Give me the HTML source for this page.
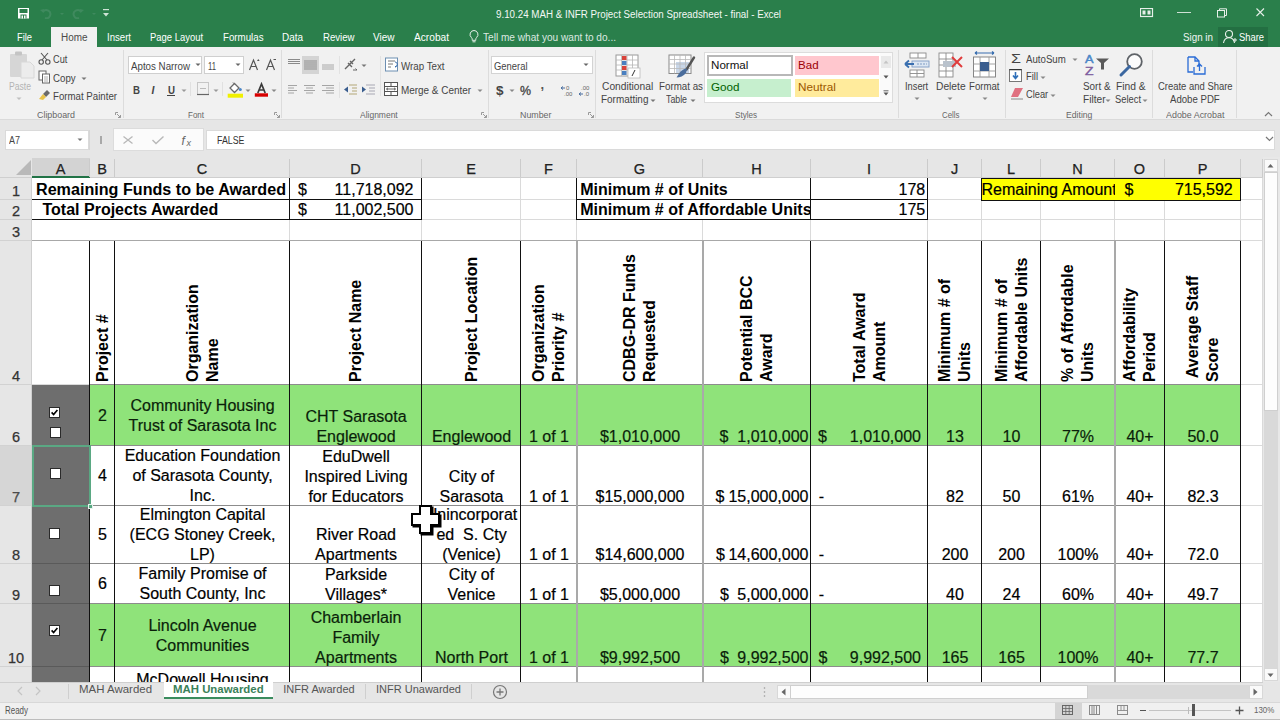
<!DOCTYPE html><html><head><meta charset="utf-8"><style>
html,body{margin:0;padding:0;width:1280px;height:720px;overflow:hidden;background:#fff}
body{position:relative;font-family:"Liberation Sans",sans-serif}
body>div,body>svg{position:absolute;box-sizing:border-box}
.c{position:absolute;box-sizing:border-box;display:flex;flex-direction:column;font-size:16px;line-height:20px;color:#000;overflow:hidden;white-space:pre}
</style></head><body>
<div style="left:0px;top:0px;width:1280px;height:47px;background:#2a7f4b"></div>
<svg style="left:17px;top:7px;" width="13" height="12" viewBox="0 0 13 12"><rect x="1" y="1" width="11" height="10.5" fill="#fff"/><rect x="2.5" y="2" width="8" height="4" fill="#2a7f4b"/><rect x="3.5" y="7.5" width="6" height="4" fill="#2a7f4b"/><rect x="4.5" y="8.5" width="1.5" height="3" fill="#fff"/><rect x="7" y="8.5" width="1.5" height="3" fill="#fff"/></svg>
<svg style="left:40px;top:6px;" width="60" height="13" viewBox="0 0 60 13"><path d="M3 6 a4 4 0 1 1 2 6" stroke="#3f8a5e" stroke-width="2" fill="none"/><path d="M0 4 l4 -1 l-0.5 4z" fill="#3f8a5e"/><path d="M20 7 l2 2 l2-2z" fill="#3f8a5e"/><path d="M41 6 a4 4 0 1 0 -2 6" stroke="#3f8a5e" stroke-width="2" fill="none"/><path d="M44 4 l-4 -1 l0.5 4z" fill="#3f8a5e"/><path d="M52 7 l2 2 l2-2z" fill="#3f8a5e"/></svg>
<svg style="left:102px;top:8px;" width="9" height="10" viewBox="0 0 9 10"><rect x="1" y="1" width="6" height="1.2" fill="#cfe3d6"/><path d="M1 5h6l-3 3.5z" fill="#cfe3d6"/></svg>
<div style="position:absolute;left:496.00px;top:9.35px;font-size:10px;line-height:11.5px;color:#f4f8f5;transform:scaleX(0.9768);transform-origin:0 0;white-space:pre;">9.10.24 MAH &amp; INFR Project Selection Spreadsheet - final - Excel</div>
<svg style="left:1140px;top:8px;" width="14" height="10" viewBox="0 0 14 10"><rect x="0.5" y="0.5" width="12" height="8" fill="none" stroke="#e6efe9" stroke-width="1.2"/><rect x="2.5" y="2.5" width="3" height="4" fill="#e6efe9"/><rect x="7.5" y="2.5" width="3" height="4" fill="#e6efe9"/></svg>
<div style="left:1177px;top:12px;width:14px;height:1px;background:#cfe0d5"></div>
<svg style="left:1216px;top:7px;" width="13" height="12" viewBox="0 0 13 12"><rect x="1.5" y="3.5" width="7" height="6.5" fill="none" stroke="#e6efe9" stroke-width="1"/><path d="M3.5 3.5V1.8h7v6.7h-2" fill="none" stroke="#e6efe9" stroke-width="1"/></svg>
<svg style="left:1255px;top:7px;" width="11" height="11" viewBox="0 0 11 11"><path d="M1.5 1.5L9 9M9 1.5L1.5 9" stroke="#e6efe9" stroke-width="1.1"/></svg>
<div style="left:51px;top:27px;width:46px;height:20px;background:#f1f1f1"></div>
<div style="position:absolute;left:17.00px;top:32.35px;font-size:10px;line-height:11.5px;color:#fff;transform:scaleX(0.9310);transform-origin:0 0;white-space:pre;">File</div>
<div style="position:absolute;left:60.50px;top:32.35px;font-size:10px;line-height:11.5px;color:#4a4a4a;transform:scaleX(0.9935);transform-origin:0 0;white-space:pre;">Home</div>
<div style="position:absolute;left:106.75px;top:32.35px;font-size:10px;line-height:11.5px;color:#fff;transform:scaleX(0.9597);transform-origin:0 0;white-space:pre;">Insert</div>
<div style="position:absolute;left:150.00px;top:32.35px;font-size:10px;line-height:11.5px;color:#fff;transform:scaleX(0.9438);transform-origin:0 0;white-space:pre;">Page Layout</div>
<div style="position:absolute;left:222.50px;top:32.35px;font-size:10px;line-height:11.5px;color:#fff;transform:scaleX(0.9719);transform-origin:0 0;white-space:pre;">Formulas</div>
<div style="position:absolute;left:282.00px;top:32.35px;font-size:10px;line-height:11.5px;color:#fff;transform:scaleX(0.9942);transform-origin:0 0;white-space:pre;">Data</div>
<div style="position:absolute;left:322.50px;top:32.35px;font-size:10px;line-height:11.5px;color:#fff;transform:scaleX(0.9607);transform-origin:0 0;white-space:pre;">Review</div>
<div style="position:absolute;left:373.00px;top:32.35px;font-size:10px;line-height:11.5px;color:#fff;white-space:pre;">View</div>
<div style="position:absolute;left:414.00px;top:32.35px;font-size:10px;line-height:11.5px;color:#fff;transform:scaleX(1.0156);transform-origin:0 0;white-space:pre;">Acrobat</div>
<svg style="left:468px;top:29px;" width="12" height="14" viewBox="0 0 12 14"><path d="M6 1.5a4 4 0 0 0-2.6 7c0.5 0.5 0.8 1 0.8 1.8v1h3.6v-1c0-0.8 0.3-1.3 0.8-1.8A4 4 0 0 0 6 1.5z" fill="none" stroke="#e8f0ea" stroke-width="1"/><path d="M4.5 12.8h3" stroke="#e8f0ea" stroke-width="1"/></svg>
<div style="position:absolute;left:483.00px;top:32.35px;font-size:10px;line-height:11.5px;color:#dce9e0;transform:scaleX(1.0097);transform-origin:0 0;white-space:pre;">Tell me what you want to do...</div>
<div style="position:absolute;left:1182.50px;top:32.35px;font-size:10px;line-height:11.5px;color:#f0f5f2;transform:scaleX(0.9812);transform-origin:0 0;white-space:pre;">Sign in</div>
<div style="left:1218px;top:27px;width:50px;height:20px;background:#236f42"></div>
<svg style="left:1222px;top:29px;" width="16" height="16" viewBox="0 0 16 16"><circle cx="7" cy="5" r="3.5" fill="none" stroke="#eaf2ec" stroke-width="1.1"/><path d="M1.5 14c0.5-3.5 2.5-5.2 5.5-5.2s5 1.7 5.5 5.2" fill="none" stroke="#eaf2ec" stroke-width="1.1"/><path d="M11 11h4M13 9v4" stroke="#eaf2ec" stroke-width="1"/></svg>
<div style="position:absolute;left:1238.75px;top:32.35px;font-size:10px;line-height:11.5px;color:#fff;transform:scaleX(0.9369);transform-origin:0 0;white-space:pre;">Share</div>
<div style="left:0px;top:47px;width:1280px;height:73px;background:#f1f1f1"></div>
<div style="left:0px;top:119px;width:1280px;height:1px;background:#dadada"></div>
<div style="left:123px;top:50px;width:1px;height:68px;background:#dcdcdc"></div>
<div style="left:281px;top:50px;width:1px;height:68px;background:#dcdcdc"></div>
<div style="left:488px;top:50px;width:1px;height:68px;background:#dcdcdc"></div>
<div style="left:595px;top:50px;width:1px;height:68px;background:#dcdcdc"></div>
<div style="left:898px;top:50px;width:1px;height:68px;background:#dcdcdc"></div>
<div style="left:1005px;top:50px;width:1px;height:68px;background:#dcdcdc"></div>
<div style="left:1152px;top:50px;width:1px;height:68px;background:#dcdcdc"></div>
<div style="left:1236px;top:50px;width:1px;height:68px;background:#dcdcdc"></div>
<div style="position:absolute;left:37.00px;top:110.42px;font-size:9px;line-height:10.35px;color:#666;transform:scaleX(0.9865);transform-origin:0 0;white-space:pre;">Clipboard</div>
<div style="position:absolute;left:188.40px;top:110.42px;font-size:9px;line-height:10.35px;color:#666;transform:scaleX(0.8885);transform-origin:0 0;white-space:pre;">Font</div>
<div style="position:absolute;left:359.80px;top:110.42px;font-size:9px;line-height:10.35px;color:#666;transform:scaleX(0.9421);transform-origin:0 0;white-space:pre;">Alignment</div>
<div style="position:absolute;left:519.50px;top:110.42px;font-size:9px;line-height:10.35px;color:#666;transform:scaleX(0.9810);transform-origin:0 0;white-space:pre;">Number</div>
<div style="position:absolute;left:735.30px;top:110.42px;font-size:9px;line-height:10.35px;color:#666;transform:scaleX(0.8977);transform-origin:0 0;white-space:pre;">Styles</div>
<div style="position:absolute;left:942.40px;top:110.42px;font-size:9px;line-height:10.35px;color:#666;transform:scaleX(0.8748);transform-origin:0 0;white-space:pre;">Cells</div>
<div style="position:absolute;left:1065.60px;top:110.42px;font-size:9px;line-height:10.35px;color:#666;transform:scaleX(0.9594);transform-origin:0 0;white-space:pre;">Editing</div>
<div style="position:absolute;left:1165.80px;top:110.42px;font-size:9px;line-height:10.35px;color:#666;transform:scaleX(0.9891);transform-origin:0 0;white-space:pre;">Adobe Acrobat</div>
<svg style="left:115px;top:112px;" width="7" height="7" viewBox="0 0 7 7"><path d="M0.5 0.5h2.5M0.5 0.5v2.5" stroke="#999" stroke-width="1" fill="none"/><path d="M2 2L5.5 5.5M5.5 3v2.5h-2.5" stroke="#999" stroke-width="1" fill="none"/></svg>
<svg style="left:274px;top:112px;" width="7" height="7" viewBox="0 0 7 7"><path d="M0.5 0.5h2.5M0.5 0.5v2.5" stroke="#999" stroke-width="1" fill="none"/><path d="M2 2L5.5 5.5M5.5 3v2.5h-2.5" stroke="#999" stroke-width="1" fill="none"/></svg>
<svg style="left:481px;top:112px;" width="7" height="7" viewBox="0 0 7 7"><path d="M0.5 0.5h2.5M0.5 0.5v2.5" stroke="#999" stroke-width="1" fill="none"/><path d="M2 2L5.5 5.5M5.5 3v2.5h-2.5" stroke="#999" stroke-width="1" fill="none"/></svg>
<svg style="left:588px;top:112px;" width="7" height="7" viewBox="0 0 7 7"><path d="M0.5 0.5h2.5M0.5 0.5v2.5" stroke="#999" stroke-width="1" fill="none"/><path d="M2 2L5.5 5.5M5.5 3v2.5h-2.5" stroke="#999" stroke-width="1" fill="none"/></svg>
<svg style="left:8px;top:50px;" width="27" height="30" viewBox="0 0 27 30"><rect x="2" y="4" width="17" height="23" rx="1" fill="#d6d6d6"/><rect x="7" y="1.5" width="7" height="4" rx="1" fill="#c4c4c4"/><path d="M13 12h9l4 4v12H13z" fill="#ececec" stroke="#d8d8d8" stroke-width="1"/></svg>
<div style="position:absolute;left:8.60px;top:81.35px;font-size:10px;line-height:11.5px;color:#b4b4b4;transform:scaleX(0.8604);transform-origin:0 0;white-space:pre;">Paste</div>
<svg style="left:16px;top:97px;" width="7" height="4" viewBox="0 0 7 4"><path d="M0.5 0.5h5l-2.5 2.5z" fill="#c0c0c0"/></svg>
<svg style="left:38px;top:52px;" width="13" height="13" viewBox="0 0 13 13"><path d="M3 1l6 7M10 1L4 8" stroke="#555" stroke-width="1.1" fill="none"/><circle cx="3.2" cy="10" r="2.2" fill="none" stroke="#555" stroke-width="1.1"/><circle cx="9.8" cy="10" r="2.2" fill="none" stroke="#555" stroke-width="1.1"/></svg>
<div style="position:absolute;left:53.40px;top:54.35px;font-size:10px;line-height:11.5px;color:#444;transform:scaleX(0.9190);transform-origin:0 0;white-space:pre;">Cut</div>
<svg style="left:38px;top:70px;" width="13" height="14" viewBox="0 0 13 14"><rect x="1" y="1" width="7" height="9" fill="#fff" stroke="#666" stroke-width="1"/><rect x="4.5" y="4" width="7" height="9" fill="#fff" stroke="#666" stroke-width="1"/><path d="M6 7h4M6 9h4M6 11h4" stroke="#999" stroke-width="0.8"/></svg>
<div style="position:absolute;left:53.40px;top:73.35px;font-size:10px;line-height:11.5px;color:#444;transform:scaleX(0.9681);transform-origin:0 0;white-space:pre;">Copy</div>
<svg style="left:81px;top:77px;" width="7" height="4" viewBox="0 0 7 4"><path d="M0.5 0.5h5l-2.5 2.5z" fill="#777"/></svg>
<svg style="left:38px;top:89px;" width="13" height="12" viewBox="0 0 13 12"><path d="M9 1l3 3l-4 4l-3-3z" fill="#6a6a6a"/><path d="M5 5l3 3l-3 3l-4-1z" fill="#e8c34a"/></svg>
<div style="position:absolute;left:53.40px;top:91.35px;font-size:10px;line-height:11.5px;color:#444;transform:scaleX(0.9678);transform-origin:0 0;white-space:pre;">Format Painter</div>
<div style="left:128px;top:56px;width:74px;height:18px;background:#fff;border:1px solid #cfcfcf"></div>
<div style="position:absolute;left:131.00px;top:60.06px;font-size:10.5px;line-height:12.07px;color:#444;transform:scaleX(0.9276);transform-origin:0 0;white-space:pre;">Aptos Narrow</div>
<svg style="left:195px;top:63px;" width="7" height="4" viewBox="0 0 7 4"><path d="M0.5 0.5h5l-2.5 2.5z" fill="#666"/></svg>
<div style="left:204px;top:56px;width:40px;height:18px;background:#fff;border:1px solid #cfcfcf"></div>
<div style="position:absolute;left:207.50px;top:60.06px;font-size:10.5px;line-height:12.07px;color:#444;transform:scaleX(0.7340);transform-origin:0 0;white-space:pre;">11</div>
<svg style="left:235px;top:63px;" width="7" height="4" viewBox="0 0 7 4"><path d="M0.5 0.5h5l-2.5 2.5z" fill="#666"/></svg>
<svg style="left:248px;top:57px;" width="28" height="15" viewBox="0 0 28 15"><path d="M1.5 13L5.5 3L9.5 13M3 9.5h5" stroke="#555" stroke-width="1.2" fill="none"/><path d="M9 4l1.3-2l1.3 2z" fill="#555"/><path d="M18.5 13L22.5 3L26.5 13M20 9.5h5" stroke="#555" stroke-width="1.2" fill="none"/><path d="M25.5 2.5h2.5" stroke="#555" stroke-width="1"/></svg>
<div style="position:absolute;left:132.60px;top:84.06px;font-size:10.5px;line-height:12.07px;color:#444;font-weight:bold;transform:scaleX(0.9231);transform-origin:0 0;white-space:pre;">B</div>
<div style="position:absolute;left:151.50px;top:84.06px;font-size:10.5px;line-height:12.07px;color:#444;font-weight:bold;white-space:pre;font-style:italic;">I</div>
<div style="position:absolute;left:167.50px;top:84.06px;font-size:10.5px;line-height:12.07px;color:#444;font-weight:bold;transform:scaleX(0.9231);transform-origin:0 0;white-space:pre;">U</div>
<div style="left:167px;top:95px;width:8px;height:1px;background:#444"></div>
<svg style="left:181px;top:89px;" width="7" height="4" viewBox="0 0 7 4"><path d="M0.5 0.5h5l-2.5 2.5z" fill="#999"/></svg>
<div style="left:190px;top:82px;width:1px;height:14px;background:#e0e0e0"></div>
<svg style="left:196px;top:81px;" width="14" height="15" viewBox="0 0 14 15"><rect x="1.5" y="1.5" width="11" height="12" fill="none" stroke="#9a9a9a" stroke-width="1" stroke-dasharray="1 1"/><path d="M1 13.5h12" stroke="#666" stroke-width="1.2"/><path d="M4 7.5h6" stroke="#bbb" stroke-width="1"/></svg>
<svg style="left:213px;top:89px;" width="7" height="4" viewBox="0 0 7 4"><path d="M0.5 0.5h5l-2.5 2.5z" fill="#999"/></svg>
<div style="left:222px;top:82px;width:1px;height:14px;background:#e0e0e0"></div>
<svg style="left:227px;top:81px;" width="18" height="18" viewBox="0 0 18 18"><path d="M7.5 2.5l4.5 4.5l-4.5 4.5l-4.5-4.5z" fill="#fff" stroke="#6a6a6a" stroke-width="1.3"/><path d="M6 1.5l2 2" stroke="#6a6a6a" stroke-width="1"/><circle cx="13.3" cy="8.5" r="1.5" fill="#4a86c8"/><rect x="0.7" y="12.7" width="15.3" height="4" fill="#f0f000"/></svg>
<svg style="left:245px;top:89px;" width="7" height="4" viewBox="0 0 7 4"><path d="M0.5 0.5h5l-2.5 2.5z" fill="#888"/></svg>
<svg style="left:254px;top:82px;" width="15" height="16" viewBox="0 0 15 16"><path d="M3.8 11L7.5 2L11.2 11M5 8h5" stroke="#3a3a3a" stroke-width="1.7" fill="none"/><rect x="0.8" y="11.3" width="13.2" height="3.4" fill="#d80000"/></svg>
<svg style="left:271px;top:89px;" width="7" height="4" viewBox="0 0 7 4"><path d="M0.5 0.5h5l-2.5 2.5z" fill="#888"/></svg>
<svg style="left:286px;top:56px;" width="50" height="20" viewBox="0 0 50 20"><path d="M2 3.5h12M2 5.5h12M2 7.5h12" stroke="#8a8a8a" stroke-width="1"/><rect x="16" y="0" width="17" height="18" fill="#d4d4d4"/><path d="M18 5h13M18 7h13M18 9h13M18 11h13M18 13h13" stroke="#8f8f8f" stroke-width="1"/><path d="M36 9h12M36 11h12M36 13h12" stroke="#a8a8a8" stroke-width="1"/></svg>
<div style="left:339px;top:56px;width:1px;height:18px;background:#e2e2e2"></div>
<svg style="left:344px;top:58px;" width="24" height="14" viewBox="0 0 24 14"><path d="M1 11L11 1M4 5l4 4M6 3l3 3" stroke="#666" stroke-width="1.4"/><path d="M9 12h4l-1.5-1.5" stroke="#666" stroke-width="1" fill="none"/><path d="M17.5 6.5h5l-2.5 2.5z" fill="#777"/></svg>
<div style="left:380px;top:56px;width:1px;height:40px;background:#e2e2e2"></div>
<svg style="left:385px;top:57px;" width="15" height="15" viewBox="0 0 15 15"><rect x="0.5" y="1" width="12" height="13" fill="#fff" stroke="#6d8fb2" stroke-width="1"/><path d="M3 4h7M3 7h5M3 10h3" stroke="#777" stroke-width="1"/><path d="M10 5c3 0 3 5 0 5l1.5-1.5" stroke="#3a6fb0" stroke-width="1" fill="none"/></svg>
<div style="position:absolute;left:400.50px;top:60.65px;font-size:10px;line-height:11.5px;color:#444;transform:scaleX(0.9743);transform-origin:0 0;white-space:pre;">Wrap Text</div>
<svg style="left:287px;top:84px;" width="50" height="12" viewBox="0 0 50 12"><path d="M1 1.5h9M1 4h6M1 6.5h9M1 9h6" stroke="#a5a5a5" stroke-width="1.2"/><path d="M17 1.5h11M19 4h7M17 6.5h11M19 9h7" stroke="#a5a5a5" stroke-width="1.2"/><path d="M35 1.5h12M39 4h8M35 6.5h12M39 9h8" stroke="#a5a5a5" stroke-width="1.2"/></svg>
<div style="left:339px;top:82px;width:1px;height:16px;background:#e2e2e2"></div>
<svg style="left:343px;top:83px;" width="34" height="13" viewBox="0 0 34 13"><path d="M6 2h8M9 5h5M9 8h5M6 11h8" stroke="#c8c0a0" stroke-width="1.4"/><path d="M1 6.5l4-3v6z" fill="#3a5d8e"/><path d="M23 2h9M26 5h6M26 8h6M23 11h9" stroke="#c0c0c8" stroke-width="1.4"/><path d="M23 6.5l-4-3v6z" fill="#3a5d8e"/></svg>
<svg style="left:384px;top:82px;" width="16" height="15" viewBox="0 0 16 15"><rect x="0.5" y="0.5" width="13" height="13" fill="#fff" stroke="#555" stroke-width="1"/><path d="M0.5 4.5h13M0.5 9.5h13M7 0.5v4M7 9.5v4" stroke="#555" stroke-width="1"/><path d="M2.5 7h9M2.5 7l1.5-1.2M2.5 7l1.5 1.2M11.5 7l-1.5-1.2M11.5 7l-1.5 1.2" stroke="#555" stroke-width="0.9"/></svg>
<div style="position:absolute;left:400.80px;top:85.25px;font-size:10px;line-height:11.5px;color:#444;transform:scaleX(0.9918);transform-origin:0 0;white-space:pre;">Merge &amp; Center</div>
<svg style="left:477px;top:89px;" width="7" height="4" viewBox="0 0 7 4"><path d="M0.5 0.5h5l-2.5 2.5z" fill="#888"/></svg>
<div style="left:491px;top:56px;width:102px;height:18px;background:#fff;border:1px solid #d3d3d3"></div>
<div style="position:absolute;left:493.50px;top:60.85px;font-size:10px;line-height:11.5px;color:#444;transform:scaleX(0.9417);transform-origin:0 0;white-space:pre;">General</div>
<svg style="left:583px;top:63px;" width="7" height="4" viewBox="0 0 7 4"><path d="M0.5 0.5h5l-2.5 2.5z" fill="#666"/></svg>
<div style="position:absolute;left:495.50px;top:84.70px;font-size:12px;line-height:13.8px;color:#444;font-weight:bold;transform:scaleX(1.1239);transform-origin:0 0;white-space:pre;">$</div>
<svg style="left:509px;top:89px;" width="7" height="4" viewBox="0 0 7 4"><path d="M0.5 0.5h5l-2.5 2.5z" fill="#888"/></svg>
<div style="position:absolute;left:520.00px;top:84.70px;font-size:12px;line-height:13.8px;color:#444;transform:scaleX(1.0309);transform-origin:0 0;white-space:pre;-webkit-text-stroke:0.3px #444;">%</div>
<div style="position:absolute;left:540.50px;top:78.12px;font-size:13px;line-height:14.95px;color:#555;font-weight:bold;white-space:pre;">,</div>
<svg style="left:560px;top:84px;" width="32" height="13" viewBox="0 0 32 13"><path d="M1 4h4M3 2.5L1 4l2 1.5" stroke="#4a6fa0" stroke-width="1" fill="none"/><text x="6" y="6" font-size="6" fill="#666" font-family="Liberation Sans">0</text><text x="4" y="12" font-size="6" fill="#666" font-family="Liberation Sans">.00</text><text x="21" y="6" font-size="6" fill="#666" font-family="Liberation Sans">.00</text><path d="M19 10h4M21 8.5L19 10l2 1.5" stroke="#4a6fa0" stroke-width="1" fill="none"/><text x="24" y="12" font-size="6" fill="#666" font-family="Liberation Sans">.0</text></svg>
<svg style="left:615px;top:54px;" width="27" height="25" viewBox="0 0 27 25"><rect x="1" y="1" width="22" height="21" fill="#fff" stroke="#9a9a9a" stroke-width="1"/><path d="M1 6h22M1 11h22M1 16h22M6.5 1v21M12 1v21M17.5 1v21" stroke="#b5b5b5" stroke-width="0.8"/><rect x="7" y="2" width="4.5" height="4" fill="#d8433b"/><rect x="7" y="7" width="4.5" height="4" fill="#4a7fc0"/><rect x="7" y="12" width="4.5" height="4" fill="#d8433b"/><rect x="7" y="17" width="4.5" height="4" fill="#4a7fc0"/><rect x="13" y="14" width="12" height="10" fill="#fff" stroke="#bbb" stroke-width="0.8"/><path d="M17 22l3-6" stroke="#333" stroke-width="1"/></svg>
<div style="position:absolute;left:601.80px;top:81.35px;font-size:10px;line-height:11.5px;color:#444;transform:scaleX(1.0234);transform-origin:0 0;white-space:pre;">Conditional</div>
<div style="position:absolute;left:600.60px;top:93.95px;font-size:10px;line-height:11.5px;color:#444;transform:scaleX(0.9919);transform-origin:0 0;white-space:pre;">Formatting</div>
<svg style="left:650px;top:99px;" width="7" height="4" viewBox="0 0 7 4"><path d="M0.5 0.5h5l-2.5 2.5z" fill="#777"/></svg>
<svg style="left:668px;top:53px;" width="28" height="26" viewBox="0 0 28 26"><rect x="1" y="2" width="22" height="18.5" fill="#fff" stroke="#8a8a8a" stroke-width="1"/><rect x="8" y="9" width="13" height="11" fill="#c8d6e8"/><path d="M1 6.5h22M1 11h22M1 15.5h22M6.5 2v18.5M12 2v18.5M17.5 2v18.5" stroke="#b9b9b9" stroke-width="0.8"/><path d="M26 4.5L18.5 16.5" stroke="#555" stroke-width="2.4" stroke-linecap="round"/><path d="M19 15.5c-3 0-6 2-8 5l-2.5 4c3.5 0 7-1.5 9.5-4.5z" fill="#4a6d9c"/></svg>
<div style="position:absolute;left:659.00px;top:81.35px;font-size:10px;line-height:11.5px;color:#444;transform:scaleX(0.9776);transform-origin:0 0;white-space:pre;">Format as</div>
<div style="position:absolute;left:665.70px;top:93.95px;font-size:10px;line-height:11.5px;color:#444;transform:scaleX(0.8785);transform-origin:0 0;white-space:pre;">Table</div>
<svg style="left:690px;top:99px;" width="7" height="4" viewBox="0 0 7 4"><path d="M0.5 0.5h5l-2.5 2.5z" fill="#777"/></svg>
<div style="left:704px;top:52px;width:177px;height:51px;background:#fff;border:1px solid #dcdcdc;border-right:none"></div>
<div style="left:707px;top:55px;width:86px;height:21px;background:#fff;border:2px solid #b8b8b8"></div>
<div style="left:795px;top:56px;width:84px;height:19px;background:#ffc7ce"></div>
<div style="left:707px;top:79px;width:84px;height:18px;background:#c6efce"></div>
<div style="left:795px;top:79px;width:84px;height:18px;background:#ffeb9c"></div>
<div style="position:absolute;left:711.00px;top:59.27px;font-size:11px;line-height:12.65px;color:#111;transform:scaleX(1.0551);transform-origin:0 0;white-space:pre;">Normal</div>
<div style="position:absolute;left:798.40px;top:59.27px;font-size:11px;line-height:12.65px;color:#9c0006;transform:scaleX(1.0526);transform-origin:0 0;white-space:pre;">Bad</div>
<div style="position:absolute;left:711.00px;top:81.27px;font-size:11px;line-height:12.65px;color:#006100;transform:scaleX(1.0592);transform-origin:0 0;white-space:pre;">Good</div>
<div style="position:absolute;left:798.40px;top:81.27px;font-size:11px;line-height:12.65px;color:#9c5700;transform:scaleX(1.0661);transform-origin:0 0;white-space:pre;">Neutral</div>
<div style="left:880px;top:52px;width:13px;height:51px;background:#fafafa;border:1px solid #dcdcdc;border-left:none"></div>
<div style="left:881px;top:56px;width:10px;height:12px;background:#e9e9e9"></div>
<svg style="left:883px;top:60px;" width="6" height="4" viewBox="0 0 6 4"><path d="M0.5 3.5h5l-2.5-3z" fill="#c4c4c4"/></svg>
<svg style="left:883px;top:75px;" width="6" height="4" viewBox="0 0 6 4"><path d="M0.5 0.5h5l-2.5 3z" fill="#555"/></svg>
<svg style="left:883px;top:90px;" width="6" height="6" viewBox="0 0 6 6"><path d="M0.5 0.8h5" stroke="#666" stroke-width="1"/><path d="M0.5 2.5h5l-2.5 3z" fill="#555"/></svg>
<svg style="left:904px;top:52px;" width="26" height="26" viewBox="0 0 26 26"><rect x="6" y="1" width="16" height="5" fill="#fff" stroke="#8a8a8a" stroke-width="0.9"/><path d="M14 1v5" stroke="#8a8a8a" stroke-width="0.9"/><rect x="8" y="9" width="17" height="6" fill="#dce6f2" stroke="#7e9cc4" stroke-width="0.9"/><path d="M13 12h10" stroke="#7e9cc4" stroke-width="1" stroke-dasharray="2 1"/><path d="M1 12h9M1 12l4-3.5M1 12l4 3.5" stroke="#3a6fb0" stroke-width="1.8" fill="none"/><rect x="6" y="18" width="14" height="7" fill="#fff" stroke="#8a8a8a" stroke-width="0.9"/><path d="M13 18v7M6 21.5h14" stroke="#8a8a8a" stroke-width="0.9"/></svg>
<div style="position:absolute;left:905.40px;top:81.35px;font-size:10px;line-height:11.5px;color:#444;transform:scaleX(0.9277);transform-origin:0 0;white-space:pre;">Insert</div>
<svg style="left:914px;top:97px;" width="7" height="4" viewBox="0 0 7 4"><path d="M0.5 0.5h5l-2.5 2.5z" fill="#888"/></svg>
<svg style="left:938px;top:52px;" width="28" height="26" viewBox="0 0 28 26"><rect x="1" y="1" width="14" height="24" fill="#fff" stroke="#8a8a8a" stroke-width="0.9"/><path d="M1 7h14M1 13h14M1 19h14M8 1v24" stroke="#8a8a8a" stroke-width="0.9"/><rect x="5" y="9" width="13" height="6" fill="#b9c2cc"/><path d="M14 5l10 10M24 5L14 15" stroke="#e03c3c" stroke-width="2"/></svg>
<div style="position:absolute;left:936.00px;top:81.35px;font-size:10px;line-height:11.5px;color:#444;transform:scaleX(1.0241);transform-origin:0 0;white-space:pre;">Delete</div>
<svg style="left:947px;top:97px;" width="7" height="4" viewBox="0 0 7 4"><path d="M0.5 0.5h5l-2.5 2.5z" fill="#888"/></svg>
<svg style="left:972px;top:50px;" width="26" height="29" viewBox="0 0 26 29"><path d="M3 3h19M3 3l2-1.5M3 3l2 1.5M22 3l-2-1.5M22 3l-2 1.5" stroke="#3a6fb0" stroke-width="1.2" fill="none"/><rect x="1.5" y="7" width="22" height="20" fill="#fff" stroke="#7a7a7a" stroke-width="0.9"/><path d="M1.5 14h22M1.5 21h22M8 7v20M17 7v20" stroke="#9a9a9a" stroke-width="0.9"/><rect x="8" y="12" width="9" height="9" fill="#3a5d8e"/></svg>
<div style="position:absolute;left:969.00px;top:81.35px;font-size:10px;line-height:11.5px;color:#444;transform:scaleX(0.9631);transform-origin:0 0;white-space:pre;">Format</div>
<svg style="left:982px;top:97px;" width="7" height="4" viewBox="0 0 7 4"><path d="M0.5 0.5h5l-2.5 2.5z" fill="#888"/></svg>
<div style="position:absolute;left:1010.50px;top:53.20px;font-size:12px;line-height:13.8px;color:#444;transform:scaleX(1.3482);transform-origin:0 0;white-space:pre;">Σ</div>
<div style="position:absolute;left:1025.80px;top:53.65px;font-size:10px;line-height:11.5px;color:#444;transform:scaleX(0.9676);transform-origin:0 0;white-space:pre;">AutoSum</div>
<svg style="left:1072px;top:58px;" width="7" height="4" viewBox="0 0 7 4"><path d="M0.5 0.5h5l-2.5 2.5z" fill="#888"/></svg>
<svg style="left:1009px;top:69px;" width="14" height="14" viewBox="0 0 14 14"><rect x="0.5" y="0.5" width="12" height="12" fill="#fff" stroke="#777" stroke-width="1"/><path d="M0.5 0.5h12" stroke="#333" stroke-width="1.5"/><path d="M6.5 3v6M4 6.5l2.5 3l2.5-3" stroke="#2f6fb8" stroke-width="1.6" fill="none"/></svg>
<div style="position:absolute;left:1025.80px;top:71.35px;font-size:10px;line-height:11.5px;color:#444;transform:scaleX(0.9394);transform-origin:0 0;white-space:pre;">Fill</div>
<svg style="left:1040px;top:76px;" width="7" height="4" viewBox="0 0 7 4"><path d="M0.5 0.5h5l-2.5 2.5z" fill="#888"/></svg>
<svg style="left:1010px;top:87px;" width="15" height="13" viewBox="0 0 15 13"><path d="M5 1l8 0l-5 9h-7z" fill="#e07080"/><path d="M1 12h12" stroke="#888" stroke-width="1"/></svg>
<div style="position:absolute;left:1025.80px;top:88.95px;font-size:10px;line-height:11.5px;color:#444;transform:scaleX(0.9291);transform-origin:0 0;white-space:pre;">Clear</div>
<svg style="left:1050px;top:94px;" width="7" height="4" viewBox="0 0 7 4"><path d="M0.5 0.5h5l-2.5 2.5z" fill="#888"/></svg>
<div style="position:absolute;left:1085.00px;top:53.85px;font-size:10px;line-height:11.5px;color:#4a86c8;transform:scaleX(1.2743);transform-origin:0 0;white-space:pre;-webkit-text-stroke:0.4px #4a86c8;">A</div>
<div style="position:absolute;left:1085.00px;top:66.35px;font-size:10px;line-height:11.5px;color:#7d5c9e;transform:scaleX(1.3917);transform-origin:0 0;white-space:pre;-webkit-text-stroke:0.4px #7d5c9e;">Z</div>
<svg style="left:1095px;top:57px;" width="15" height="13" viewBox="0 0 15 13"><path d="M1 1.5h13l-5 4.5v6.5h-3v-6.5z" fill="#5a5a5a"/></svg>
<div style="position:absolute;left:1082.50px;top:81.35px;font-size:10px;line-height:11.5px;color:#444;transform:scaleX(0.9897);transform-origin:0 0;white-space:pre;">Sort &amp;</div>
<div style="position:absolute;left:1082.50px;top:93.85px;font-size:10px;line-height:11.5px;color:#444;transform:scaleX(1.0126);transform-origin:0 0;white-space:pre;">Filter</div>
<svg style="left:1105px;top:99px;" width="7" height="4" viewBox="0 0 7 4"><path d="M0.5 0.5h5l-2.5 2.5z" fill="#888"/></svg>
<svg style="left:1118px;top:52px;" width="28" height="26" viewBox="0 0 28 26"><circle cx="16.5" cy="9.5" r="7.3" fill="#fcfcfc" stroke="#5f6368" stroke-width="1.8"/><path d="M11.5 14.5L3 23" stroke="#3b67a0" stroke-width="3" stroke-linecap="round"/></svg>
<div style="position:absolute;left:1116.00px;top:81.35px;font-size:10px;line-height:11.5px;color:#444;transform:scaleX(1.0277);transform-origin:0 0;white-space:pre;">Find &amp;</div>
<div style="position:absolute;left:1114.50px;top:93.85px;font-size:10px;line-height:11.5px;color:#444;transform:scaleX(0.9355);transform-origin:0 0;white-space:pre;">Select</div>
<svg style="left:1142px;top:99px;" width="7" height="4" viewBox="0 0 7 4"><path d="M0.5 0.5h5l-2.5 2.5z" fill="#888"/></svg>
<svg style="left:1186px;top:56px;" width="20" height="20" viewBox="0 0 20 20"><path d="M2 1h7l4 4v6" fill="none" stroke="#2a6cd6" stroke-width="1.3"/><path d="M2 1v15h5" fill="none" stroke="#2a6cd6" stroke-width="1.3"/><path d="M9 1v4h4" fill="none" stroke="#2a6cd6" stroke-width="1.3"/><path d="M8 11v7h11v-7" fill="none" stroke="#2a6cd6" stroke-width="1.3"/><path d="M13.5 15V8M11 10.5l2.5-2.5l2.5 2.5" fill="none" stroke="#2a6cd6" stroke-width="1.3"/></svg>
<div style="position:absolute;left:1157.60px;top:81.15px;font-size:10px;line-height:11.5px;color:#444;transform:scaleX(0.9451);transform-origin:0 0;white-space:pre;">Create and Share</div>
<div style="position:absolute;left:1170.30px;top:94.35px;font-size:10px;line-height:11.5px;color:#444;transform:scaleX(0.9615);transform-origin:0 0;white-space:pre;">Adobe PDF</div>
<svg style="left:1264px;top:111px;" width="9" height="6" viewBox="0 0 9 6"><path d="M1 5l3.5-3.5L8 5" stroke="#777" stroke-width="1.2" fill="none"/></svg>
<div style="left:0px;top:120px;width:1280px;height:38px;background:#e6e6e6"></div>
<div style="left:5px;top:130px;width:84px;height:20px;background:#fff;border:1px solid #dadada"></div>
<div style="position:absolute;left:9.00px;top:135.35px;font-size:10px;line-height:11.5px;color:#444;transform:scaleX(0.8993);transform-origin:0 0;white-space:pre;">A7</div>
<svg style="left:77px;top:138px;" width="7" height="4" viewBox="0 0 7 4"><path d="M0.5 0.5h5l-2.5 2.5z" fill="#777"/></svg>
<div style="left:100px;top:136px;width:2px;height:8px;background:#a8a8a8"></div>
<div style="left:89px;top:130px;width:1px;height:20px;background:#d6d6d6"></div>
<div style="left:113px;top:128px;width:91px;height:23px;background:#fbfbfb;border:1px solid #dcdcdc"></div>
<svg style="left:122px;top:135px;" width="12" height="10" viewBox="0 0 12 10"><path d="M1.5 1.5L10.5 8.5M10.5 1.5L1.5 8.5" stroke="#b8b8b8" stroke-width="1.3"/></svg>
<svg style="left:151px;top:135px;" width="14" height="10" viewBox="0 0 14 10"><path d="M1.5 5l3.5 3.5L12.5 1.5" stroke="#b8b8b8" stroke-width="1.4" fill="none"/></svg>
<div style="position:absolute;left:181.50px;top:134.70px;font-size:12px;line-height:13.8px;color:#666;white-space:pre;font-style:italic;font-family:"Liberation Serif",serif;">f</div>
<div style="position:absolute;left:186.50px;top:137.92px;font-size:9px;line-height:10.35px;color:#666;white-space:pre;font-style:italic;font-family:"Liberation Serif",serif;">x</div>
<div style="left:206px;top:130px;width:1069px;height:20px;background:#fff;border:1px solid #dadada"></div>
<div style="position:absolute;left:216.60px;top:135.15px;font-size:10px;line-height:11.5px;color:#333;transform:scaleX(0.8802);transform-origin:0 0;white-space:pre;">FALSE</div>
<svg style="left:1265px;top:136px;" width="9" height="6" viewBox="0 0 9 6"><path d="M1 1l3.5 3.5L8 1" stroke="#777" stroke-width="1.2" fill="none"/></svg>
<div style="left:0px;top:157px;width:1263px;height:525px;background:#fff"></div>
<div style="left:0px;top:157px;width:1263px;height:21px;background:#e6e6e6"></div>
<div style="left:32px;top:158px;width:58px;height:20px;background:#d3d3d3"></div>
<div style="left:32px;top:176px;width:58px;height:2px;background:#217346"></div>
<svg style="left:15px;top:159px;" width="17" height="18" viewBox="0 0 17 18"><path d="M16 1V16H1z" fill="#b9b9b9"/></svg>
<div style="left:89px;top:159px;width:1px;height:18px;background:#cbcbcb"></div>
<div style="position:absolute;left:55.66px;top:160.76px;font-size:14.5px;line-height:16.67px;color:#222;white-space:pre;-webkit-text-stroke:0.25px #222;">A</div>
<div style="left:114px;top:159px;width:1px;height:18px;background:#cbcbcb"></div>
<div style="position:absolute;left:97.16px;top:160.76px;font-size:14.5px;line-height:16.67px;color:#222;white-space:pre;-webkit-text-stroke:0.25px #222;">B</div>
<div style="left:289px;top:159px;width:1px;height:18px;background:#cbcbcb"></div>
<div style="position:absolute;left:196.76px;top:160.76px;font-size:14.5px;line-height:16.67px;color:#222;white-space:pre;-webkit-text-stroke:0.25px #222;">C</div>
<div style="left:421px;top:159px;width:1px;height:18px;background:#cbcbcb"></div>
<div style="position:absolute;left:350.26px;top:160.76px;font-size:14.5px;line-height:16.67px;color:#222;white-space:pre;-webkit-text-stroke:0.25px #222;">D</div>
<div style="left:520px;top:159px;width:1px;height:18px;background:#cbcbcb"></div>
<div style="position:absolute;left:466.16px;top:160.76px;font-size:14.5px;line-height:16.67px;color:#222;white-space:pre;-webkit-text-stroke:0.25px #222;">E</div>
<div style="left:576px;top:159px;width:1px;height:18px;background:#cbcbcb"></div>
<div style="position:absolute;left:544.07px;top:160.76px;font-size:14.5px;line-height:16.67px;color:#222;white-space:pre;-webkit-text-stroke:0.25px #222;">F</div>
<div style="left:702px;top:159px;width:1px;height:18px;background:#cbcbcb"></div>
<div style="position:absolute;left:633.86px;top:160.76px;font-size:14.5px;line-height:16.67px;color:#222;white-space:pre;-webkit-text-stroke:0.25px #222;">G</div>
<div style="left:810px;top:159px;width:1px;height:18px;background:#cbcbcb"></div>
<div style="position:absolute;left:751.26px;top:160.76px;font-size:14.5px;line-height:16.67px;color:#222;white-space:pre;-webkit-text-stroke:0.25px #222;">H</div>
<div style="left:927px;top:159px;width:1px;height:18px;background:#cbcbcb"></div>
<div style="position:absolute;left:866.99px;top:160.76px;font-size:14.5px;line-height:16.67px;color:#222;white-space:pre;-webkit-text-stroke:0.25px #222;">I</div>
<div style="left:981px;top:159px;width:1px;height:18px;background:#cbcbcb"></div>
<div style="position:absolute;left:950.88px;top:160.76px;font-size:14.5px;line-height:16.67px;color:#222;white-space:pre;-webkit-text-stroke:0.25px #222;">J</div>
<div style="left:1040px;top:159px;width:1px;height:18px;background:#cbcbcb"></div>
<div style="position:absolute;left:1006.97px;top:160.76px;font-size:14.5px;line-height:16.67px;color:#222;white-space:pre;-webkit-text-stroke:0.25px #222;">L</div>
<div style="left:1114px;top:159px;width:1px;height:18px;background:#cbcbcb"></div>
<div style="position:absolute;left:1072.26px;top:160.76px;font-size:14.5px;line-height:16.67px;color:#222;white-space:pre;-webkit-text-stroke:0.25px #222;">N</div>
<div style="left:1164px;top:159px;width:1px;height:18px;background:#cbcbcb"></div>
<div style="position:absolute;left:1133.86px;top:160.76px;font-size:14.5px;line-height:16.67px;color:#222;white-space:pre;-webkit-text-stroke:0.25px #222;">O</div>
<div style="left:1240px;top:159px;width:1px;height:18px;background:#cbcbcb"></div>
<div style="position:absolute;left:1197.66px;top:160.76px;font-size:14.5px;line-height:16.67px;color:#222;white-space:pre;-webkit-text-stroke:0.25px #222;">P</div>
<div style="left:1262px;top:159px;width:1px;height:18px;background:#cbcbcb"></div>
<div style="left:0px;top:177px;width:32px;height:1px;background:#cfcfcf"></div>
<div style="left:90px;top:177px;width:1173px;height:1px;background:#cfcfcf"></div>
<div style="left:0px;top:178px;width:32px;height:504px;background:#e6e6e6"></div>
<div style="left:0px;top:446px;width:32px;height:60px;background:#d6d6d6"></div>
<div style="left:31px;top:178px;width:1px;height:504px;background:#cfcfcf"></div>
<div style="left:0px;top:199px;width:31px;height:1px;background:#d2d2d2"></div>
<div style="position:absolute;left:11.97px;top:182.76px;font-size:14.5px;line-height:16.67px;color:#333;white-space:pre;-webkit-text-stroke:0.25px #333;">1</div>
<div style="left:0px;top:219px;width:31px;height:1px;background:#d2d2d2"></div>
<div style="position:absolute;left:11.97px;top:202.76px;font-size:14.5px;line-height:16.67px;color:#333;white-space:pre;-webkit-text-stroke:0.25px #333;">2</div>
<div style="left:0px;top:240px;width:31px;height:1px;background:#d2d2d2"></div>
<div style="position:absolute;left:11.97px;top:223.76px;font-size:14.5px;line-height:16.67px;color:#333;white-space:pre;-webkit-text-stroke:0.25px #333;">3</div>
<div style="left:0px;top:384px;width:31px;height:1px;background:#d2d2d2"></div>
<div style="position:absolute;left:11.97px;top:367.77px;font-size:14.5px;line-height:16.67px;color:#333;white-space:pre;-webkit-text-stroke:0.25px #333;">4</div>
<div style="left:0px;top:445px;width:31px;height:1px;background:#d2d2d2"></div>
<div style="position:absolute;left:11.97px;top:428.77px;font-size:14.5px;line-height:16.67px;color:#333;white-space:pre;-webkit-text-stroke:0.25px #333;">6</div>
<div style="left:0px;top:505px;width:31px;height:1px;background:#d2d2d2"></div>
<div style="position:absolute;left:11.97px;top:488.77px;font-size:14.5px;line-height:16.67px;color:#555;white-space:pre;-webkit-text-stroke:0.25px #333;">7</div>
<div style="left:0px;top:563px;width:31px;height:1px;background:#d2d2d2"></div>
<div style="position:absolute;left:11.97px;top:546.76px;font-size:14.5px;line-height:16.67px;color:#333;white-space:pre;-webkit-text-stroke:0.25px #333;">8</div>
<div style="left:0px;top:603px;width:31px;height:1px;background:#d2d2d2"></div>
<div style="position:absolute;left:11.97px;top:586.76px;font-size:14.5px;line-height:16.67px;color:#333;white-space:pre;-webkit-text-stroke:0.25px #333;">9</div>
<div style="left:0px;top:666px;width:31px;height:1px;background:#d2d2d2"></div>
<div style="position:absolute;left:7.94px;top:649.76px;font-size:14.5px;line-height:16.67px;color:#333;white-space:pre;-webkit-text-stroke:0.25px #333;">10</div>
<div style="left:0px;top:719px;width:31px;height:1px;background:#d2d2d2"></div>
<div style="left:89px;top:241px;width:1px;height:441px;background:#dadada"></div>
<div style="left:114px;top:241px;width:1px;height:441px;background:#dadada"></div>
<div style="left:289px;top:178px;width:1px;height:504px;background:#dadada"></div>
<div style="left:421px;top:178px;width:1px;height:504px;background:#dadada"></div>
<div style="left:520px;top:178px;width:1px;height:504px;background:#dadada"></div>
<div style="left:576px;top:178px;width:1px;height:504px;background:#dadada"></div>
<div style="left:702px;top:220px;width:1px;height:462px;background:#dadada"></div>
<div style="left:810px;top:178px;width:1px;height:504px;background:#dadada"></div>
<div style="left:927px;top:178px;width:1px;height:504px;background:#dadada"></div>
<div style="left:981px;top:178px;width:1px;height:504px;background:#dadada"></div>
<div style="left:1040px;top:178px;width:1px;height:504px;background:#dadada"></div>
<div style="left:1114px;top:178px;width:1px;height:504px;background:#dadada"></div>
<div style="left:1164px;top:178px;width:1px;height:504px;background:#dadada"></div>
<div style="left:1240px;top:178px;width:1px;height:504px;background:#dadada"></div>
<div style="left:1262px;top:178px;width:1px;height:504px;background:#dadada"></div>
<div style="left:32px;top:199px;width:1231px;height:1px;background:#dadada"></div>
<div style="left:32px;top:219px;width:1231px;height:1px;background:#dadada"></div>
<div style="left:32px;top:240px;width:1231px;height:1px;background:#dadada"></div>
<div style="left:32px;top:384px;width:1231px;height:1px;background:#dadada"></div>
<div style="left:32px;top:445px;width:1231px;height:1px;background:#dadada"></div>
<div style="left:32px;top:505px;width:1231px;height:1px;background:#dadada"></div>
<div style="left:32px;top:563px;width:1231px;height:1px;background:#dadada"></div>
<div style="left:32px;top:603px;width:1231px;height:1px;background:#dadada"></div>
<div style="left:32px;top:666px;width:1231px;height:1px;background:#dadada"></div>
<div style="left:90px;top:385px;width:1151px;height:61px;background:#8fe37a"></div>
<div style="left:90px;top:604px;width:1151px;height:63px;background:#8fe37a"></div>
<div style="left:32px;top:385px;width:58px;height:297px;background:#6e6e6e"></div>
<div style="left:32px;top:445px;width:58px;height:1px;background:#5a5a5a"></div>
<div style="left:32px;top:505px;width:58px;height:1px;background:#5a5a5a"></div>
<div style="left:32px;top:563px;width:58px;height:1px;background:#5a5a5a"></div>
<div style="left:32px;top:603px;width:58px;height:1px;background:#5a5a5a"></div>
<div style="left:32px;top:666px;width:58px;height:1px;background:#5a5a5a"></div>
<div style="left:982px;top:178px;width:259px;height:22px;background:#ffff00"></div>
<div style="left:32px;top:199px;width:390px;height:1px;background:#111"></div>
<div style="left:32px;top:219px;width:390px;height:1px;background:#111"></div>
<div style="left:289px;top:178px;width:1px;height:42px;background:#111"></div>
<div style="left:421px;top:178px;width:1px;height:42px;background:#111"></div>
<div style="left:577px;top:199px;width:351px;height:1px;background:#111"></div>
<div style="left:577px;top:219px;width:351px;height:1px;background:#111"></div>
<div style="left:576px;top:178px;width:1px;height:42px;background:#111"></div>
<div style="left:810px;top:178px;width:1px;height:42px;background:#111"></div>
<div style="left:927px;top:178px;width:1px;height:42px;background:#111"></div>
<div style="left:981px;top:178px;width:260px;height:23px;border:1px solid #111"></div>
<div style="left:32px;top:240px;width:1209px;height:1px;background:#a8a8a8"></div>
<div style="left:90px;top:384px;width:1151px;height:1px;background:#8c8c8c"></div>
<div style="left:90px;top:445px;width:1151px;height:1px;background:#8c8c8c"></div>
<div style="left:90px;top:505px;width:1151px;height:1px;background:#8c8c8c"></div>
<div style="left:90px;top:563px;width:1151px;height:1px;background:#8c8c8c"></div>
<div style="left:90px;top:603px;width:1151px;height:1px;background:#8c8c8c"></div>
<div style="left:90px;top:666px;width:1151px;height:1px;background:#8c8c8c"></div>
<div style="left:89px;top:241px;width:1px;height:441px;background:#111"></div>
<div style="left:114px;top:241px;width:1px;height:441px;background:#111"></div>
<div style="left:289px;top:241px;width:1px;height:441px;background:#111"></div>
<div style="left:421px;top:241px;width:1px;height:441px;background:#111"></div>
<div style="left:520px;top:241px;width:1px;height:441px;background:#111"></div>
<div style="left:576px;top:241px;width:2px;height:441px;background:#a9a9a9"></div>
<div style="left:702px;top:241px;width:2px;height:441px;background:#a9a9a9"></div>
<div style="left:810px;top:241px;width:1px;height:441px;background:#111"></div>
<div style="left:927px;top:241px;width:1px;height:441px;background:#111"></div>
<div style="left:981px;top:241px;width:1px;height:441px;background:#111"></div>
<div style="left:1040px;top:241px;width:1px;height:441px;background:#111"></div>
<div style="left:1114px;top:241px;width:2px;height:441px;background:#a9a9a9"></div>
<div style="left:1164px;top:241px;width:1px;height:441px;background:#111"></div>
<div style="left:1240px;top:241px;width:1px;height:441px;background:#111"></div>
<div style="position:absolute;left:36.25px;top:180.90px;font-size:16px;line-height:18.4px;color:#000;font-weight:bold;transform:scaleX(1.0080);transform-origin:0 0;white-space:pre;">Remaining Funds to be Awarded</div>
<div style="position:absolute;left:42.50px;top:201.40px;font-size:16px;line-height:18.4px;color:#000;font-weight:bold;white-space:pre;">Total Projects Awarded</div>
<div style="position:absolute;left:298.00px;top:180.70px;font-size:16px;line-height:18.4px;color:#000;-webkit-text-stroke:0.2px #000;white-space:pre;">$</div>
<div style="position:absolute;left:334.62px;top:180.70px;font-size:16px;line-height:18.4px;color:#000;-webkit-text-stroke:0.2px #000;white-space:pre;">11,718,092</div>
<div style="position:absolute;left:298.00px;top:200.90px;font-size:16px;line-height:18.4px;color:#000;-webkit-text-stroke:0.2px #000;white-space:pre;">$</div>
<div style="position:absolute;left:334.62px;top:200.90px;font-size:16px;line-height:18.4px;color:#000;-webkit-text-stroke:0.2px #000;white-space:pre;">11,002,500</div>
<div style="position:absolute;left:580.20px;top:180.70px;font-size:16px;line-height:18.4px;color:#000;font-weight:bold;white-space:pre;">Minimum # of Units</div>
<div style="left:577px;top:200px;width:233px;height:19px;overflow:hidden"><div style="position:absolute;left:3.20px;top:1.40px;font-size:16px;line-height:18.4px;color:#000;font-weight:bold;white-space:pre;">Minimum # of Affordable Units</div></div>
<div style="position:absolute;left:898.56px;top:180.90px;font-size:16px;line-height:18.4px;color:#000;-webkit-text-stroke:0.2px #000;white-space:pre;">178</div>
<div style="position:absolute;left:898.56px;top:201.40px;font-size:16px;line-height:18.4px;color:#000;-webkit-text-stroke:0.2px #000;white-space:pre;">175</div>
<div style="left:982px;top:178px;width:133px;height:22px;overflow:hidden"><div style="position:absolute;left:-0.50px;top:2.90px;font-size:16px;line-height:18.4px;color:#000;-webkit-text-stroke:0.2px #000;white-space:pre;">Remaining Amount</div></div>
<div style="position:absolute;left:1124.50px;top:180.90px;font-size:16px;line-height:18.4px;color:#000;-webkit-text-stroke:0.2px #000;white-space:pre;">$</div>
<div style="position:absolute;left:1174.92px;top:180.90px;font-size:16px;line-height:18.4px;color:#000;-webkit-text-stroke:0.2px #000;white-space:pre;">715,592</div>
<div style="position:absolute;left:92.90px;top:382px;transform-origin:0 0;transform:rotate(-90deg);font-size:16px;line-height:20px;font-weight:bold;white-space:pre;color:#000">Project #</div>
<div style="position:absolute;left:182.90px;top:382px;transform-origin:0 0;transform:rotate(-90deg);font-size:16px;line-height:20px;font-weight:bold;white-space:pre;color:#000">Organization<br>Name</div>
<div style="position:absolute;left:346.40px;top:382px;transform-origin:0 0;transform:rotate(-90deg);font-size:16px;line-height:20px;font-weight:bold;white-space:pre;color:#000">Project Name</div>
<div style="position:absolute;left:461.90px;top:382px;transform-origin:0 0;transform:rotate(-90deg);font-size:16px;line-height:20px;font-weight:bold;white-space:pre;color:#000">Project Location</div>
<div style="position:absolute;left:529.40px;top:382px;transform-origin:0 0;transform:rotate(-90deg);font-size:16px;line-height:20px;font-weight:bold;white-space:pre;color:#000">Organization<br>Priority #</div>
<div style="position:absolute;left:620.40px;top:382px;transform-origin:0 0;transform:rotate(-90deg);font-size:16px;line-height:20px;font-weight:bold;white-space:pre;color:#000">CDBG-DR Funds<br>Requested</div>
<div style="position:absolute;left:737.40px;top:382px;transform-origin:0 0;transform:rotate(-90deg);font-size:16px;line-height:20px;font-weight:bold;white-space:pre;color:#000">Potential BCC<br>Award</div>
<div style="position:absolute;left:849.90px;top:382px;transform-origin:0 0;transform:rotate(-90deg);font-size:16px;line-height:20px;font-weight:bold;white-space:pre;color:#000">Total Award<br>Amount</div>
<div style="position:absolute;left:935.40px;top:382px;transform-origin:0 0;transform:rotate(-90deg);font-size:16px;line-height:20px;font-weight:bold;white-space:pre;color:#000">Minimum # of<br>Units</div>
<div style="position:absolute;left:991.90px;top:382px;transform-origin:0 0;transform:rotate(-90deg);font-size:16px;line-height:20px;font-weight:bold;white-space:pre;color:#000">Minimum # of<br>Affordable Units</div>
<div style="position:absolute;left:1058.40px;top:382px;transform-origin:0 0;transform:rotate(-90deg);font-size:16px;line-height:20px;font-weight:bold;white-space:pre;color:#000">% of Affordable<br>Units</div>
<div style="position:absolute;left:1120.40px;top:382px;transform-origin:0 0;transform:rotate(-90deg);font-size:16px;line-height:20px;font-weight:bold;white-space:pre;color:#000">Affordability<br>Period</div>
<div style="position:absolute;left:1183.40px;top:382px;transform-origin:0 0;transform:rotate(-90deg);font-size:16px;line-height:20px;font-weight:bold;white-space:pre;color:#000"> Average Staff<br>Score</div>
<div style="position:absolute;left:98.05px;top:406.95px;font-size:16px;line-height:18.4px;color:#0a1f0a;-webkit-text-stroke:0.2px #0a1f0a;white-space:pre;">2</div>
<div style="position:absolute;left:130.48px;top:396.95px;font-size:16px;line-height:18.4px;color:#0a1f0a;-webkit-text-stroke:0.2px #0a1f0a;white-space:pre;">Community Housing</div>
<div style="position:absolute;left:128.55px;top:416.95px;font-size:16px;line-height:18.4px;color:#0a1f0a;-webkit-text-stroke:0.2px #0a1f0a;white-space:pre;">Trust of Sarasota Inc</div>
<div style="position:absolute;left:305.46px;top:407.90px;font-size:16px;line-height:18.4px;color:#0a1f0a;-webkit-text-stroke:0.2px #0a1f0a;white-space:pre;">CHT Sarasota</div>
<div style="position:absolute;left:316.42px;top:427.90px;font-size:16px;line-height:18.4px;color:#0a1f0a;-webkit-text-stroke:0.2px #0a1f0a;white-space:pre;">Englewood</div>
<div style="position:absolute;left:431.92px;top:427.90px;font-size:16px;line-height:18.4px;color:#0a1f0a;-webkit-text-stroke:0.2px #0a1f0a;white-space:pre;">Englewood</div>
<div style="position:absolute;left:528.99px;top:427.90px;font-size:16px;line-height:18.4px;color:#0a1f0a;-webkit-text-stroke:0.2px #0a1f0a;white-space:pre;">1 of 1</div>
<div style="position:absolute;left:599.97px;top:427.90px;font-size:16px;line-height:18.4px;color:#0a1f0a;-webkit-text-stroke:0.2px #0a1f0a;white-space:pre;">$1,010,000</div>
<div style="position:absolute;left:946.10px;top:427.90px;font-size:16px;line-height:18.4px;color:#0a1f0a;-webkit-text-stroke:0.2px #0a1f0a;white-space:pre;">13</div>
<div style="position:absolute;left:1002.60px;top:427.90px;font-size:16px;line-height:18.4px;color:#0a1f0a;-webkit-text-stroke:0.2px #0a1f0a;white-space:pre;">10</div>
<div style="position:absolute;left:1061.99px;top:427.90px;font-size:16px;line-height:18.4px;color:#0a1f0a;-webkit-text-stroke:0.2px #0a1f0a;white-space:pre;">77%</div>
<div style="position:absolute;left:1126.43px;top:427.90px;font-size:16px;line-height:18.4px;color:#0a1f0a;-webkit-text-stroke:0.2px #0a1f0a;white-space:pre;">40+</div>
<div style="position:absolute;left:1187.43px;top:427.90px;font-size:16px;line-height:18.4px;color:#0a1f0a;-webkit-text-stroke:0.2px #0a1f0a;white-space:pre;">50.0</div>
<div style="position:absolute;left:98.05px;top:467.45px;font-size:16px;line-height:18.4px;color:#000;-webkit-text-stroke:0.2px #000;white-space:pre;">4</div>
<div style="position:absolute;left:124.67px;top:447.45px;font-size:16px;line-height:18.4px;color:#000;-webkit-text-stroke:0.2px #000;white-space:pre;">Education Foundation</div>
<div style="position:absolute;left:132.39px;top:467.45px;font-size:16px;line-height:18.4px;color:#000;-webkit-text-stroke:0.2px #000;white-space:pre;">of Sarasota County,</div>
<div style="position:absolute;left:189.61px;top:487.45px;font-size:16px;line-height:18.4px;color:#000;-webkit-text-stroke:0.2px #000;white-space:pre;">Inc.</div>
<div style="position:absolute;left:322.21px;top:447.90px;font-size:16px;line-height:18.4px;color:#000;-webkit-text-stroke:0.2px #000;white-space:pre;">EduDwell</div>
<div style="position:absolute;left:304.42px;top:467.90px;font-size:16px;line-height:18.4px;color:#000;-webkit-text-stroke:0.2px #000;white-space:pre;">Inspired Living</div>
<div style="position:absolute;left:308.43px;top:487.90px;font-size:16px;line-height:18.4px;color:#000;-webkit-text-stroke:0.2px #000;white-space:pre;">for Educators</div>
<div style="position:absolute;left:448.83px;top:467.90px;font-size:16px;line-height:18.4px;color:#000;-webkit-text-stroke:0.2px #000;white-space:pre;">City of</div>
<div style="position:absolute;left:439.48px;top:487.90px;font-size:16px;line-height:18.4px;color:#000;-webkit-text-stroke:0.2px #000;white-space:pre;">Sarasota</div>
<div style="position:absolute;left:528.99px;top:487.90px;font-size:16px;line-height:18.4px;color:#000;-webkit-text-stroke:0.2px #000;white-space:pre;">1 of 1</div>
<div style="position:absolute;left:595.52px;top:487.90px;font-size:16px;line-height:18.4px;color:#000;-webkit-text-stroke:0.2px #000;white-space:pre;">$15,000,000</div>
<div style="position:absolute;left:946.10px;top:487.90px;font-size:16px;line-height:18.4px;color:#000;-webkit-text-stroke:0.2px #000;white-space:pre;">82</div>
<div style="position:absolute;left:1002.60px;top:487.90px;font-size:16px;line-height:18.4px;color:#000;-webkit-text-stroke:0.2px #000;white-space:pre;">50</div>
<div style="position:absolute;left:1061.99px;top:487.90px;font-size:16px;line-height:18.4px;color:#000;-webkit-text-stroke:0.2px #000;white-space:pre;">61%</div>
<div style="position:absolute;left:1126.43px;top:487.90px;font-size:16px;line-height:18.4px;color:#000;-webkit-text-stroke:0.2px #000;white-space:pre;">40+</div>
<div style="position:absolute;left:1187.43px;top:487.90px;font-size:16px;line-height:18.4px;color:#000;-webkit-text-stroke:0.2px #000;white-space:pre;">82.3</div>
<div style="position:absolute;left:98.05px;top:526.45px;font-size:16px;line-height:18.4px;color:#000;-webkit-text-stroke:0.2px #000;white-space:pre;">5</div>
<div style="position:absolute;left:139.80px;top:506.45px;font-size:16px;line-height:18.4px;color:#000;-webkit-text-stroke:0.2px #000;white-space:pre;">Elmington Capital</div>
<div style="position:absolute;left:129.59px;top:526.45px;font-size:16px;line-height:18.4px;color:#000;-webkit-text-stroke:0.2px #000;white-space:pre;">(ECG Stoney Creek,</div>
<div style="position:absolute;left:190.05px;top:546.45px;font-size:16px;line-height:18.4px;color:#000;-webkit-text-stroke:0.2px #000;white-space:pre;">LP)</div>
<div style="position:absolute;left:315.99px;top:525.90px;font-size:16px;line-height:18.4px;color:#000;-webkit-text-stroke:0.2px #000;white-space:pre;">River Road</div>
<div style="position:absolute;left:315.10px;top:545.90px;font-size:16px;line-height:18.4px;color:#000;-webkit-text-stroke:0.2px #000;white-space:pre;">Apartments</div>
<div style="position:absolute;left:528.99px;top:545.90px;font-size:16px;line-height:18.4px;color:#000;-webkit-text-stroke:0.2px #000;white-space:pre;">1 of 1</div>
<div style="position:absolute;left:595.52px;top:545.90px;font-size:16px;line-height:18.4px;color:#000;-webkit-text-stroke:0.2px #000;white-space:pre;">$14,600,000</div>
<div style="position:absolute;left:941.65px;top:545.90px;font-size:16px;line-height:18.4px;color:#000;-webkit-text-stroke:0.2px #000;white-space:pre;">200</div>
<div style="position:absolute;left:998.15px;top:545.90px;font-size:16px;line-height:18.4px;color:#000;-webkit-text-stroke:0.2px #000;white-space:pre;">200</div>
<div style="position:absolute;left:1057.54px;top:545.90px;font-size:16px;line-height:18.4px;color:#000;-webkit-text-stroke:0.2px #000;white-space:pre;">100%</div>
<div style="position:absolute;left:1126.43px;top:545.90px;font-size:16px;line-height:18.4px;color:#000;-webkit-text-stroke:0.2px #000;white-space:pre;">40+</div>
<div style="position:absolute;left:1187.43px;top:545.90px;font-size:16px;line-height:18.4px;color:#000;-webkit-text-stroke:0.2px #000;white-space:pre;">72.0</div>
<div style="position:absolute;left:98.05px;top:575.45px;font-size:16px;line-height:18.4px;color:#000;-webkit-text-stroke:0.2px #000;white-space:pre;">6</div>
<div style="position:absolute;left:138.49px;top:565.45px;font-size:16px;line-height:18.4px;color:#000;-webkit-text-stroke:0.2px #000;white-space:pre;">Family Promise of</div>
<div style="position:absolute;left:139.50px;top:585.45px;font-size:16px;line-height:18.4px;color:#000;-webkit-text-stroke:0.2px #000;white-space:pre;">South County, Inc</div>
<div style="position:absolute;left:324.88px;top:565.90px;font-size:16px;line-height:18.4px;color:#000;-webkit-text-stroke:0.2px #000;white-space:pre;">Parkside</div>
<div style="position:absolute;left:325.02px;top:585.90px;font-size:16px;line-height:18.4px;color:#000;-webkit-text-stroke:0.2px #000;white-space:pre;">Villages*</div>
<div style="position:absolute;left:448.83px;top:565.90px;font-size:16px;line-height:18.4px;color:#000;-webkit-text-stroke:0.2px #000;white-space:pre;">City of</div>
<div style="position:absolute;left:447.48px;top:585.90px;font-size:16px;line-height:18.4px;color:#000;-webkit-text-stroke:0.2px #000;white-space:pre;">Venice</div>
<div style="position:absolute;left:528.99px;top:585.90px;font-size:16px;line-height:18.4px;color:#000;-webkit-text-stroke:0.2px #000;white-space:pre;">1 of 1</div>
<div style="position:absolute;left:599.97px;top:585.90px;font-size:16px;line-height:18.4px;color:#000;-webkit-text-stroke:0.2px #000;white-space:pre;">$5,000,000</div>
<div style="position:absolute;left:946.10px;top:585.90px;font-size:16px;line-height:18.4px;color:#000;-webkit-text-stroke:0.2px #000;white-space:pre;">40</div>
<div style="position:absolute;left:1002.60px;top:585.90px;font-size:16px;line-height:18.4px;color:#000;-webkit-text-stroke:0.2px #000;white-space:pre;">24</div>
<div style="position:absolute;left:1061.99px;top:585.90px;font-size:16px;line-height:18.4px;color:#000;-webkit-text-stroke:0.2px #000;white-space:pre;">60%</div>
<div style="position:absolute;left:1126.43px;top:585.90px;font-size:16px;line-height:18.4px;color:#000;-webkit-text-stroke:0.2px #000;white-space:pre;">40+</div>
<div style="position:absolute;left:1187.43px;top:585.90px;font-size:16px;line-height:18.4px;color:#000;-webkit-text-stroke:0.2px #000;white-space:pre;">49.7</div>
<div style="position:absolute;left:98.05px;top:626.95px;font-size:16px;line-height:18.4px;color:#0a1f0a;-webkit-text-stroke:0.2px #0a1f0a;white-space:pre;">7</div>
<div style="position:absolute;left:148.38px;top:616.95px;font-size:16px;line-height:18.4px;color:#0a1f0a;-webkit-text-stroke:0.2px #0a1f0a;white-space:pre;">Lincoln Avenue</div>
<div style="position:absolute;left:155.82px;top:636.95px;font-size:16px;line-height:18.4px;color:#0a1f0a;-webkit-text-stroke:0.2px #0a1f0a;white-space:pre;">Communities</div>
<div style="position:absolute;left:310.65px;top:608.90px;font-size:16px;line-height:18.4px;color:#0a1f0a;-webkit-text-stroke:0.2px #0a1f0a;white-space:pre;">Chamberlain</div>
<div style="position:absolute;left:332.45px;top:628.90px;font-size:16px;line-height:18.4px;color:#0a1f0a;-webkit-text-stroke:0.2px #0a1f0a;white-space:pre;">Family</div>
<div style="position:absolute;left:315.10px;top:648.90px;font-size:16px;line-height:18.4px;color:#0a1f0a;-webkit-text-stroke:0.2px #0a1f0a;white-space:pre;">Apartments</div>
<div style="position:absolute;left:435.05px;top:648.90px;font-size:16px;line-height:18.4px;color:#0a1f0a;-webkit-text-stroke:0.2px #0a1f0a;white-space:pre;">North Port</div>
<div style="position:absolute;left:528.99px;top:648.90px;font-size:16px;line-height:18.4px;color:#0a1f0a;-webkit-text-stroke:0.2px #0a1f0a;white-space:pre;">1 of 1</div>
<div style="position:absolute;left:599.97px;top:648.90px;font-size:16px;line-height:18.4px;color:#0a1f0a;-webkit-text-stroke:0.2px #0a1f0a;white-space:pre;">$9,992,500</div>
<div style="position:absolute;left:941.65px;top:648.90px;font-size:16px;line-height:18.4px;color:#0a1f0a;-webkit-text-stroke:0.2px #0a1f0a;white-space:pre;">165</div>
<div style="position:absolute;left:998.15px;top:648.90px;font-size:16px;line-height:18.4px;color:#0a1f0a;-webkit-text-stroke:0.2px #0a1f0a;white-space:pre;">165</div>
<div style="position:absolute;left:1057.54px;top:648.90px;font-size:16px;line-height:18.4px;color:#0a1f0a;-webkit-text-stroke:0.2px #0a1f0a;white-space:pre;">100%</div>
<div style="position:absolute;left:1126.43px;top:648.90px;font-size:16px;line-height:18.4px;color:#0a1f0a;-webkit-text-stroke:0.2px #0a1f0a;white-space:pre;">40+</div>
<div style="position:absolute;left:1187.43px;top:648.90px;font-size:16px;line-height:18.4px;color:#0a1f0a;-webkit-text-stroke:0.2px #0a1f0a;white-space:pre;">77.7</div>
<div style="left:422px;top:506px;width:98px;height:57px;overflow:hidden"><div style="position:absolute;left:3.70px;top:-0.10px;font-size:16px;line-height:18.4px;color:#000;-webkit-text-stroke:0.2px #000;white-space:pre;">Unincorporat</div><div style="position:absolute;left:14.38px;top:19.90px;font-size:16px;line-height:18.4px;color:#000;-webkit-text-stroke:0.2px #000;white-space:pre;">ed  S. Cty</div><div style="position:absolute;left:20.15px;top:39.90px;font-size:16px;line-height:18.4px;color:#000;-webkit-text-stroke:0.2px #000;white-space:pre;">(Venice)</div></div>
<div style="position:absolute;left:719.50px;top:427.90px;font-size:16px;line-height:18.4px;color:#0a1f0a;-webkit-text-stroke:0.2px #0a1f0a;white-space:pre;">$</div>
<div style="position:absolute;left:737.33px;top:427.90px;font-size:16px;line-height:18.4px;color:#0a1f0a;-webkit-text-stroke:0.2px #0a1f0a;white-space:pre;">1,010,000</div>
<div style="position:absolute;left:818.00px;top:427.90px;font-size:16px;line-height:18.4px;color:#0a1f0a;-webkit-text-stroke:0.2px #0a1f0a;white-space:pre;">$</div>
<div style="position:absolute;left:849.83px;top:427.90px;font-size:16px;line-height:18.4px;color:#0a1f0a;-webkit-text-stroke:0.2px #0a1f0a;white-space:pre;">1,010,000</div>
<div style="position:absolute;left:715.50px;top:487.90px;font-size:16px;line-height:18.4px;color:#000;-webkit-text-stroke:0.2px #000;white-space:pre;">$</div>
<div style="position:absolute;left:728.43px;top:487.90px;font-size:16px;line-height:18.4px;color:#000;-webkit-text-stroke:0.2px #000;white-space:pre;">15,000,000</div>
<div style="position:absolute;left:818.75px;top:487.90px;font-size:16px;line-height:18.4px;color:#000;-webkit-text-stroke:0.2px #000;white-space:pre;">-</div>
<div style="position:absolute;left:716.00px;top:545.90px;font-size:16px;line-height:18.4px;color:#000;-webkit-text-stroke:0.2px #000;white-space:pre;">$</div>
<div style="position:absolute;left:728.43px;top:545.90px;font-size:16px;line-height:18.4px;color:#000;-webkit-text-stroke:0.2px #000;white-space:pre;">14,600,000</div>
<div style="position:absolute;left:818.75px;top:545.90px;font-size:16px;line-height:18.4px;color:#000;-webkit-text-stroke:0.2px #000;white-space:pre;">-</div>
<div style="position:absolute;left:720.00px;top:585.90px;font-size:16px;line-height:18.4px;color:#000;-webkit-text-stroke:0.2px #000;white-space:pre;">$</div>
<div style="position:absolute;left:737.33px;top:585.90px;font-size:16px;line-height:18.4px;color:#000;-webkit-text-stroke:0.2px #000;white-space:pre;">5,000,000</div>
<div style="position:absolute;left:818.75px;top:585.90px;font-size:16px;line-height:18.4px;color:#000;-webkit-text-stroke:0.2px #000;white-space:pre;">-</div>
<div style="position:absolute;left:720.00px;top:648.90px;font-size:16px;line-height:18.4px;color:#0a1f0a;-webkit-text-stroke:0.2px #0a1f0a;white-space:pre;">$</div>
<div style="position:absolute;left:737.33px;top:648.90px;font-size:16px;line-height:18.4px;color:#0a1f0a;-webkit-text-stroke:0.2px #0a1f0a;white-space:pre;">9,992,500</div>
<div style="position:absolute;left:818.60px;top:648.90px;font-size:16px;line-height:18.4px;color:#0a1f0a;-webkit-text-stroke:0.2px #0a1f0a;white-space:pre;">$</div>
<div style="position:absolute;left:849.83px;top:648.90px;font-size:16px;line-height:18.4px;color:#0a1f0a;-webkit-text-stroke:0.2px #0a1f0a;white-space:pre;">9,992,500</div>
<div style="position:absolute;left:136.26px;top:671.40px;font-size:16px;line-height:18.4px;color:#000;-webkit-text-stroke:0.2px #000;white-space:pre;">McDowell Housing</div>
<svg style="left:49px;top:407px;" width="11" height="11" viewBox="0 0 11 11"><rect x="0.5" y="0.5" width="10" height="10" fill="#fff" stroke="#2a2a2a" stroke-width="1"/><path d="M2.6 5.4l2 2.2l3.8-4.6" stroke="#000" stroke-width="1.6" fill="none"/></svg>
<svg style="left:50px;top:427px;" width="11" height="11" viewBox="0 0 11 11"><rect x="0.5" y="0.5" width="10" height="10" fill="#fff" stroke="#2a2a2a" stroke-width="1"/></svg>
<svg style="left:50px;top:468px;" width="11" height="11" viewBox="0 0 11 11"><rect x="0.5" y="0.5" width="10" height="10" fill="#fff" stroke="#2a2a2a" stroke-width="1"/></svg>
<svg style="left:49px;top:528px;" width="11" height="11" viewBox="0 0 11 11"><rect x="0.5" y="0.5" width="10" height="10" fill="#fff" stroke="#2a2a2a" stroke-width="1"/></svg>
<svg style="left:49px;top:585px;" width="11" height="11" viewBox="0 0 11 11"><rect x="0.5" y="0.5" width="10" height="10" fill="#fff" stroke="#2a2a2a" stroke-width="1"/></svg>
<svg style="left:49px;top:625px;" width="11" height="11" viewBox="0 0 11 11"><rect x="0.5" y="0.5" width="10" height="10" fill="#fff" stroke="#2a2a2a" stroke-width="1"/><path d="M2.6 5.4l2 2.2l3.8-4.6" stroke="#000" stroke-width="1.6" fill="none"/></svg>
<div style="left:32px;top:445px;width:59px;height:62px;border:2px solid #5aa883"></div>
<div style="left:88px;top:504px;width:5px;height:5px;background:#5aa883;border:1px solid #e8f4ee"></div>
<svg style="left:409px;top:503px;" width="36" height="36" viewBox="0 0 36 36"><path d="M11.5 3.5H24.5V11.5H32.5V24.5H24.5V32.5H11.5V24.5H3.5V11.5H11.5Z" fill="#000"/><path d="M10 2H23V10H31V23H23V31H10V23H2V10H10Z" fill="#000"/><path d="M12 4H21V12H29V21H21V29H12V21H4V12H12Z" fill="#fff"/></svg>
<div style="left:1263px;top:157px;width:17px;height:525px;background:#e8e8e8"></div>
<div style="left:1264px;top:159px;width:14px;height:13px;background:#fafafa;border:1px solid #d8d8d8"></div>
<svg style="left:1267px;top:163px;" width="8" height="5" viewBox="0 0 8 5"><path d="M0.5 4.5h6l-3-3.5z" fill="#666"/></svg>
<div style="left:1264px;top:172px;width:14px;height:239px;background:#fdfdfd;border:1px solid #cfcfcf"></div>
<div style="left:1264px;top:411px;width:14px;height:257px;background:#d9d9d9"></div>
<div style="left:1264px;top:668px;width:14px;height:13px;background:#fafafa;border:1px solid #d8d8d8"></div>
<svg style="left:1267px;top:673px;" width="8" height="5" viewBox="0 0 8 5"><path d="M0.5 0.5h6l-3 3.5z" fill="#666"/></svg>
<div style="left:0px;top:682px;width:1280px;height:20px;background:#e6e6e6"></div>
<div style="left:0px;top:682px;width:1263px;height:1px;background:#cfcfcf"></div>
<svg style="left:16px;top:686px;" width="8" height="10" viewBox="0 0 8 10"><path d="M6 1L2 5l4 4" stroke="#c4c4c4" stroke-width="1.2" fill="none"/></svg>
<svg style="left:34px;top:686px;" width="8" height="10" viewBox="0 0 8 10"><path d="M2 1l4 4l-4 4" stroke="#c4c4c4" stroke-width="1.2" fill="none"/></svg>
<div style="left:68px;top:684px;width:1px;height:15px;background:#cfcfcf"></div>
<div style="position:absolute;left:79.30px;top:683.27px;font-size:11px;line-height:12.65px;color:#555;transform:scaleX(1.0413);transform-origin:0 0;white-space:pre;">MAH Awarded</div>
<div style="left:164px;top:682px;width:109px;height:17px;background:#fff"></div>
<div style="left:164px;top:697px;width:109px;height:2px;background:#3a8c5e"></div>
<div style="position:absolute;left:172.80px;top:683.27px;font-size:11px;line-height:12.65px;color:#3b8159;font-weight:bold;transform:scaleX(1.0367);transform-origin:0 0;white-space:pre;">MAH Unawarded</div>
<div style="position:absolute;left:283.30px;top:683.27px;font-size:11px;line-height:12.65px;color:#555;white-space:pre;">INFR Awarded</div>
<div style="left:365px;top:684px;width:1px;height:15px;background:#cfcfcf"></div>
<div style="position:absolute;left:376.00px;top:683.27px;font-size:11px;line-height:12.65px;color:#555;white-space:pre;">INFR Unawarded</div>
<div style="left:471px;top:684px;width:1px;height:15px;background:#cfcfcf"></div>
<svg style="left:492px;top:684px;" width="17" height="17" viewBox="0 0 17 17"><circle cx="8" cy="8" r="6.5" fill="none" stroke="#777" stroke-width="1.2"/><path d="M8 4.5v7M4.5 8h7" stroke="#777" stroke-width="1.3"/></svg>
<svg style="left:762px;top:685px;" width="5" height="14" viewBox="0 0 5 14"><circle cx="2.5" cy="3" r="0.8" fill="#999"/><circle cx="2.5" cy="7" r="0.8" fill="#999"/><circle cx="2.5" cy="11" r="0.8" fill="#999"/></svg>
<div style="left:777px;top:685px;width:14px;height:14px;background:#fafafa;border:1px solid #d8d8d8"></div>
<svg style="left:781px;top:688px;" width="5" height="8" viewBox="0 0 5 8"><path d="M4.5 0.5v7L0.5 4z" fill="#666"/></svg>
<div style="left:790px;top:685px;width:298px;height:14px;background:#fdfdfd;border:1px solid #cfcfcf"></div>
<div style="left:1088px;top:685px;width:161px;height:14px;background:#d9d9d9"></div>
<div style="left:1249px;top:685px;width:14px;height:14px;background:#fafafa;border:1px solid #d8d8d8"></div>
<svg style="left:1253px;top:688px;" width="5" height="8" viewBox="0 0 5 8"><path d="M0.5 0.5v7L4.5 4z" fill="#666"/></svg>
<div style="left:0px;top:702px;width:1280px;height:18px;background:#f0f0f0"></div>
<div style="left:0px;top:702px;width:1280px;height:1px;background:#d8d8d8"></div>
<div style="left:0px;top:719px;width:1280px;height:1px;background:#bdbdbd"></div>
<div style="position:absolute;left:5.00px;top:704.85px;font-size:10px;line-height:11.5px;color:#555;transform:scaleX(0.7957);transform-origin:0 0;white-space:pre;">Ready</div>
<div style="left:1055px;top:703px;width:27px;height:16px;background:#d4d4d4"></div>
<svg style="left:1062px;top:705px;" width="12" height="11" viewBox="0 0 12 11"><rect x="0.5" y="0.5" width="10" height="9" fill="none" stroke="#666" stroke-width="1"/><path d="M0.5 3.5h10M0.5 6.5h10M3.8 0.5v9M7.2 0.5v9" stroke="#666" stroke-width="0.8"/></svg>
<svg style="left:1089px;top:705px;" width="12" height="11" viewBox="0 0 12 11"><rect x="0.5" y="0.5" width="10" height="9" fill="none" stroke="#8a8a8a" stroke-width="1"/><path d="M3 1v8M5 1v8M7.5 1v8" stroke="#8a8a8a" stroke-width="1"/></svg>
<svg style="left:1117px;top:705px;" width="12" height="11" viewBox="0 0 12 11"><rect x="0.5" y="0.5" width="10" height="9" fill="none" stroke="#8a8a8a" stroke-width="1"/><path d="M4 0.5v5M7 0.5v5M0.5 5.5h10" stroke="#8a8a8a" stroke-width="0.9"/></svg>
<div style="left:1140px;top:710px;width:6px;height:1.2px;background:#555"></div>
<div style="left:1149px;top:710px;width:82px;height:1px;background:#c4c4c4"></div>
<div style="left:1188px;top:707px;width:1px;height:7px;background:#bbb"></div>
<div style="left:1192px;top:704px;width:3px;height:12px;background:#555"></div>
<svg style="left:1235px;top:706px;" width="9" height="9" viewBox="0 0 9 9"><path d="M4.5 0.5v8M0.5 4.5h8" stroke="#555" stroke-width="1.3"/></svg>
<div style="position:absolute;left:1253.70px;top:704.64px;font-size:9.5px;line-height:10.92px;color:#666;transform:scaleX(0.8355);transform-origin:0 0;white-space:pre;">130%</div>
</body></html>
